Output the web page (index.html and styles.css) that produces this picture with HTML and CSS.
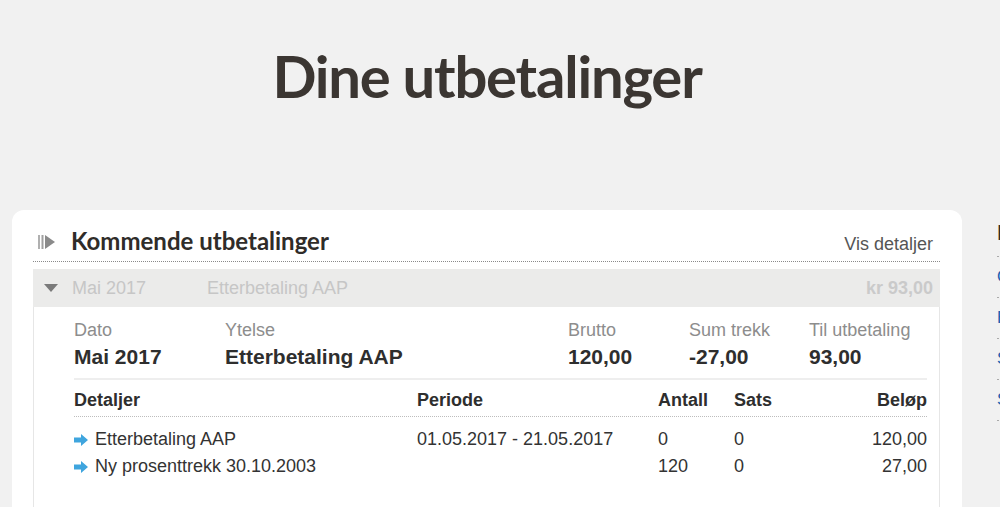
FILE: index.html
```html
<!DOCTYPE html>
<html lang="no">
<head>
<meta charset="utf-8">
<title>Dine utbetalinger</title>
<link rel="stylesheet" href="styles.css">
</head>
<body>
<h1 class="page-title">Dine utbetalinger</h1>
<div class="layout">
  <section class="card">
    <div class="card-head">
      <div class="card-title">
        <svg class="head-icon" width="18" height="14" viewBox="0 0 18 14"><rect x="0" y="0" width="2" height="14" fill="#b0b0b0"/><rect x="3.5" y="0" width="2" height="14" fill="#a0a0a0"/><polygon points="7,0 17,7 7,14" fill="#8a8a8a"/></svg>
        <h2>Kommende utbetalinger</h2>
      </div>
      <a class="vis" href="#">Vis detaljer</a>
    </div>
    <div class="summary">
      <svg class="caret" width="14" height="8" viewBox="0 0 14 8"><polygon points="0,0 14,0 7,8" fill="#7a7a7a"/></svg>
      <span class="s-date">Mai 2017</span>
      <span class="s-name">Etterbetaling AAP</span>
      <span class="s-sum">kr 93,00</span>
    </div>
    <div class="details">
      <div class="facts">
        <div class="fact f-date"><span class="lbl">Dato</span><span class="val">Mai 2017</span></div>
        <div class="fact f-name"><span class="lbl">Ytelse</span><span class="val">Etterbetaling AAP</span></div>
        <div class="fact f-brutto"><span class="lbl">Brutto</span><span class="val">120,00</span></div>
        <div class="fact f-trekk"><span class="lbl">Sum trekk</span><span class="val">-27,00</span></div>
        <div class="fact f-til"><span class="lbl">Til utbetaling</span><span class="val">93,00</span></div>
      </div>
      <div class="table">
        <div class="row thead">
          <span class="c1">Detaljer</span><span class="c2">Periode</span><span class="c3">Antall</span><span class="c4">Sats</span><span class="c5">Beløp</span>
        </div>
        <div class="row">
          <span class="c1"><svg class="arrow" width="14" height="12" viewBox="0 0 14 12"><polygon points="0,3.5 7,3.5 7,0 14,6 7,12 7,8.5 0,8.5" fill="#3fa5de"/></svg>Etterbetaling AAP</span><span class="c2">01.05.2017 - 21.05.2017</span><span class="c3">0</span><span class="c4">0</span><span class="c5">120,00</span>
        </div>
        <div class="row">
          <span class="c1"><svg class="arrow" width="14" height="12" viewBox="0 0 14 12"><polygon points="0,3.5 7,3.5 7,0 14,6 7,12 7,8.5 0,8.5" fill="#3fa5de"/></svg>Ny prosenttrekk 30.10.2003</span><span class="c2"></span><span class="c3">120</span><span class="c4">0</span><span class="c5">27,00</span>
        </div>
      </div>
    </div>
  </section>
  <aside class="side">
    <h3>Lenker</h3>
    <a href="#">Om utbetalinger</a>
    <a href="#">Endre kontonummer</a>
    <a href="#">Skattekort</a>
    <a href="#">Søknader</a>
  </aside>
</div>
</body>
</html>
```

FILE: styles.css
```css
html, body {
  margin: 0;
  padding: 0;
}
body {
  background: #f1f1f1;
  font-family: "Liberation Sans", Arial, sans-serif;
  color: #333;
  width: 1000px;
  height: 507px;
  overflow: hidden;
}
.page-title {
  margin: 0;
  padding-top: 40px;
  height: 172px;
  box-sizing: border-box;
  text-align: center;
  font-family: "Lato", "Open Sans", sans-serif;
  font-weight: 700;
  font-size: 58px;
  line-height: 72px;
  color: #3b3632;
  letter-spacing: -1.2px;
  padding-right: 26px;
}
.layout {
  display: flex;
  align-items: flex-start;
  margin-top: 38px;
  padding-left: 12px;
}
.card {
  width: 950px;
  flex: none;
  background: #fff;
  border-radius: 12px 12px 0 0;
  padding: 0 22px 40px 21px;
  box-sizing: border-box;
}
.card-head {
  display: flex;
  justify-content: space-between;
  align-items: flex-end;
  height: 52px;
  padding-bottom: 6px;
  box-sizing: border-box;
  border-bottom: 1px dotted #8a8a8a;
}
.card-title {
  display: flex;
  align-items: center;
  gap: 15px;
  padding-left: 5px;
}
.head-icon { display: block; margin-top: 1px; }
.card-title h2 {
  margin: 0;
  font-family: "Lato", "Open Sans", sans-serif;
  font-weight: 700;
  font-size: 24px;
  line-height: 28px;
  color: #2f2c29;
}
.vis {
  color: #555;
  text-decoration: none;
  font-size: 18px;
  line-height: 22px;
  padding-right: 7px;
}
.summary {
  margin-top: 7px;
  height: 38px;
  background: #ebebea;
  display: flex;
  align-items: center;
  font-size: 18px;
  color: #c6c6c6;
  padding: 0 7px 0 11px;
}
.caret { margin-right: 14px; }
.s-date { width: 135px; }
.s-name { flex: 1; }
.s-sum { font-weight: 700; color: #cacaca; }
.details {
  border-left: 1px solid #e6e6e6;
  border-right: 1px solid #e6e6e6;
  padding: 12px 12px 40px 40px;
}
.facts {
  display: flex;
  border-bottom: 2px solid #eeeeee;
  padding-bottom: 9px;
}
.fact {
  display: flex;
  flex-direction: column;
}
.lbl {
  font-size: 18px;
  line-height: 22px;
  color: #8d8d8d;
}
.val {
  margin-top: 4px;
  font-size: 21px;
  line-height: 24px;
  font-weight: 700;
  color: #2e2e2e;
}
.f-date { width: 151px; }
.f-name { width: 343px; }
.f-brutto { width: 121px; }
.f-trekk { width: 120px; }
.table { font-size: 18px; }
.row {
  display: flex;
  align-items: center;
  height: 27px;
  color: #333;
}
.row.thead {
  font-weight: 700;
  height: 37px;
  padding-top: 4px;
  box-sizing: border-box;
  border-bottom: 1px dotted #bdbdbd;
  margin-bottom: 9px;
  color: #2e2e2e;
}
.c1 { width: 343px; display: flex; align-items: center; }
.c2 { width: 241px; }
.c3 { width: 76px; }
.c4 { flex: 1; }
.c5 { text-align: right; }
.arrow { margin-right: 7px; }
.side {
  margin-left: 35px;
  flex: none;
  width: 200px;
  display: flex;
  flex-direction: column;
}
.side h3 {
  margin: 10px 0 0;
  font-family: "Lato", sans-serif;
  font-size: 20px;
  line-height: 24px;
  padding-bottom: 12px;
  border-bottom: 1px dotted #aaa;
  color: #2f2c29;
}
.side a {
  color: #1f5fb0;
  text-decoration: none;
  font-size: 17px;
  line-height: 40px;
  border-bottom: 1px dotted #aaa;
}
```
